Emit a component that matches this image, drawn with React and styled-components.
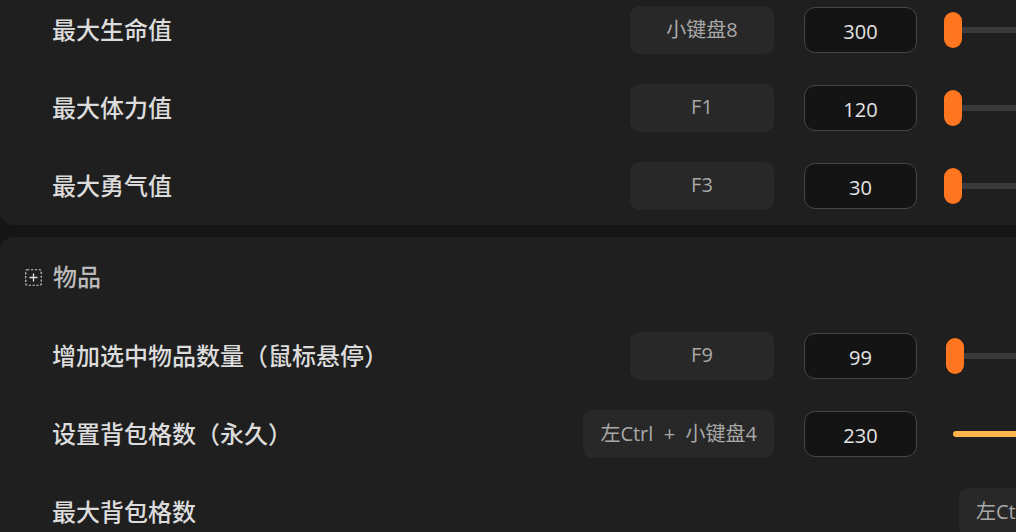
import React from "react";
import styled, { createGlobalStyle } from "styled-components";

const Global = createGlobalStyle`
  html, body { margin: 0; padding: 0; background: #151515; overflow: hidden; }
  body { font-family: "Noto Sans", "Noto Sans CJK SC", sans-serif; }
  #root { width: 1016px; height: 532px; overflow: hidden; }
`;

const Page = styled.div`
  width: 1320px;
  margin-top: -9px;
  display: flex;
  flex-direction: column;
  gap: 12px;
`;

const Card = styled.section`
  background: #1f1f1f;
  border-radius: 0 0 14px 14px;
  border-top-left-radius: ${(p) => (p.$open ? "14px" : "0")};
  border-top-right-radius: ${(p) => (p.$open ? "14px" : "0")};
  display: flex;
  flex-direction: column;
`;

const Header = styled.div`
  height: 80px;
  display: flex;
  align-items: center;
  gap: 11px;
  padding-left: 25px;
  color: #bababa;
  font-family: "Noto Sans CJK SC", sans-serif;
  font-size: 24px;
  font-weight: 500;
  & > span { margin-top: -3px; }
`;

const Row = styled.div`
  height: 78px;
  display: grid;
  grid-template-columns: 529px 192px 143px 1fr;
  align-items: center;
  padding-left: 53px;
`;

const Label = styled.div`
  color: #dcdcdc;
  font-family: "Noto Sans CJK SC", sans-serif;
  font-size: 24px;
  font-weight: 500;
  white-space: nowrap;
  margin-top: -4px;
  margin-left: -1px;
`;

const KeyBox = styled.div`
  justify-self: ${(p) => (p.$free ? "start" : "end")};
  grid-column: ${(p) => (p.$free ? "4" : "2")};
  margin-left: ${(p) => (p.$free ? "42px" : "0")};
  min-width: 144px;
  height: 48px;
  box-sizing: border-box;
  padding: 0 17px 3px;
  border-radius: 9px;
  background: #282828;
  color: #a9a9a9;
  font-family: "Open Sans", "Noto Sans CJK SC", sans-serif;
  font-size: 20px;
  display: flex;
  align-items: center;
  justify-content: center;
  white-space: pre;
`;

const NumberInput = styled.div`
  justify-self: end;
  width: 113px;
  height: 46px;
  box-sizing: border-box;
  border: 1.5px solid #464646;
  border-radius: 11px;
  background: #141414;
  color: #e4e4e4;
  font-family: "Open Sans", sans-serif;
  font-size: 20px;
  display: flex;
  align-items: center;
  justify-content: center;
  padding-top: 2px;
`;

const SliderWrap = styled.div`
  position: relative;
  height: 36px;
  margin-left: 27px;
  width: 330px;
`;

const Track = styled.div`
  position: absolute;
  left: 9px;
  right: 0;
  top: 15px;
  height: 6px;
  background: #3a3a3a;
`;

const Thumb = styled.div`
  position: absolute;
  top: 0;
  width: 18px;
  height: 36px;
  border-radius: 9px;
  background: #ff7621;
`;

const Fill = styled.div`
  margin-left: 36px;
  height: 6px;
  border-radius: 3px 0 0 3px;
  background: #ffb74d;
`;

function Slider({ value, max }) {
  const left = Math.round((value / max) * 330);
  return (
    <SliderWrap>
      <Track />
      <Thumb style={{ left }} />
    </SliderWrap>
  );
}

function ExpandIcon() {
  return (
    <svg width="17" height="17" viewBox="0 0 17 17" fill="none">
      <rect x="0.75" y="0.75" width="15.5" height="15.5" rx="1.5" stroke="#cfcfcf" strokeWidth="1.2" strokeDasharray="2.2 1.6" />
      <path d="M8.5 4.5v8M4.5 8.5h8" stroke="#e0e0e0" strokeWidth="1.3" />
    </svg>
  );
}

const stats = [
  { label: "最大生命值", key: "小键盘8", value: 300, pos: 0 },
  { label: "最大体力值", key: "F1", value: 120, pos: 0 },
  { label: "最大勇气值", key: "F3", value: 30, pos: 0 },
];

const combo = "左Ctrl  +  小键盘4";

export default function App() {
  return (
    <>
      <Global />
      <Page>
        <Card>
          {stats.map((s) => (
            <Row key={s.label}>
              <Label>{s.label}</Label>
              <KeyBox>{s.key}</KeyBox>
              <NumberInput>{s.value}</NumberInput>
              <Slider value={s.pos} max={1000} />
            </Row>
          ))}
        </Card>
        <Card $open>
          <Header>
            <ExpandIcon />
            <span>物品</span>
          </Header>
          <Row>
            <Label>增加选中物品数量（鼠标悬停）</Label>
            <KeyBox>F9</KeyBox>
            <NumberInput>99</NumberInput>
            <Slider value={2} max={330} />
          </Row>
          <Row>
            <Label>设置背包格数（永久）</Label>
            <KeyBox>{combo}</KeyBox>
            <NumberInput>230</NumberInput>
            <Fill />
          </Row>
          <Row>
            <Label>最大背包格数</Label>
            <KeyBox $free>{combo}</KeyBox>
          </Row>
        </Card>
      </Page>
    </>
  );
}
